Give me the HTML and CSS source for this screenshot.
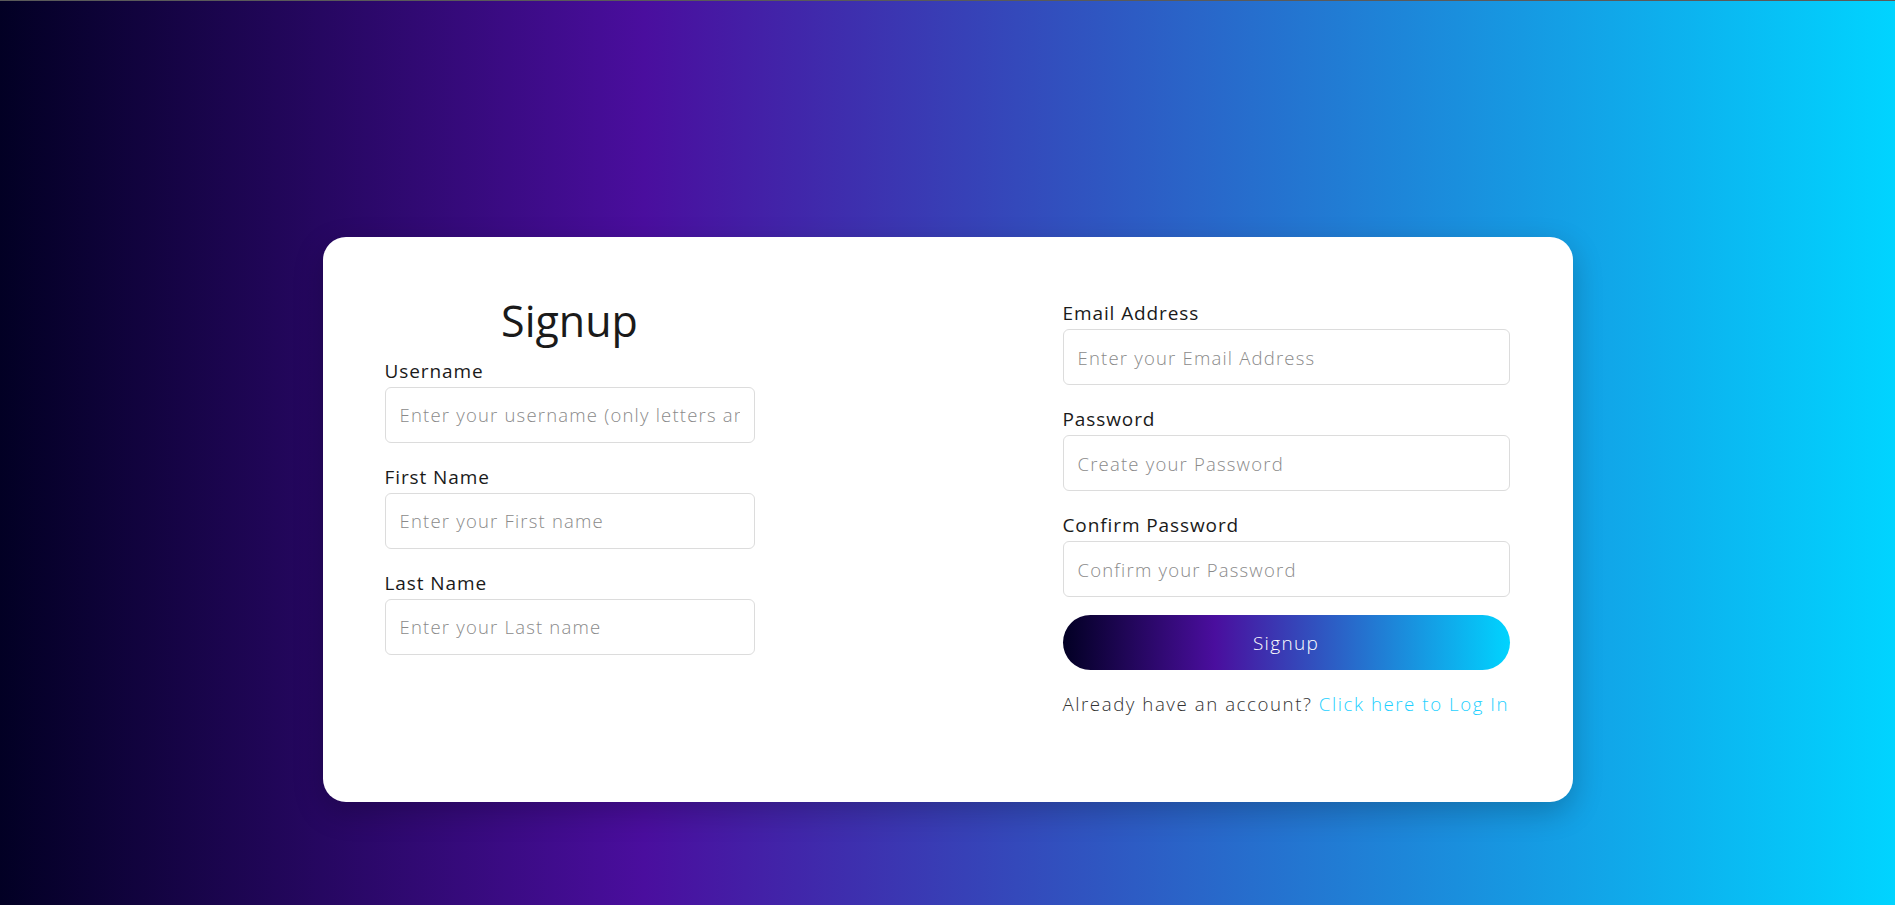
FILE: index.html
```html
<!DOCTYPE html>
<html lang="en">
<head>
<meta charset="utf-8">
<title>Signup</title>
<link rel="stylesheet" href="styles.css">
</head>
<body>
<div class="topline"></div>
<main class="page">
  <form class="card">
    <div class="col col-left">
      <h1 class="title">Signup</h1>
      <div class="field">
        <label class="label" for="username">Username</label>
        <input class="input" id="username" type="text" placeholder="Enter your username (only letters and numbers)">
      </div>
      <div class="field">
        <label class="label" for="first">First Name</label>
        <input class="input" id="first" type="text" placeholder="Enter your First name">
      </div>
      <div class="field">
        <label class="label" for="last">Last Name</label>
        <input class="input" id="last" type="text" placeholder="Enter your Last name">
      </div>
    </div>
    <div class="col col-right">
      <div class="field">
        <label class="label" for="email">Email Address</label>
        <input class="input" id="email" type="email" placeholder="Enter your Email Address">
      </div>
      <div class="field">
        <label class="label" for="pass">Password</label>
        <input class="input" id="pass" type="password" placeholder="Create your Password">
      </div>
      <div class="field field-last">
        <label class="label" for="pass2">Confirm Password</label>
        <input class="input" id="pass2" type="password" placeholder="Confirm your Password">
      </div>
      <button class="btn" type="button">Signup</button>
      <p class="switch">Already have an account? <a class="link" href="#">Click here to Log In</a></p>
    </div>
  </form>
</main>
</body>
</html>
```
FILE: styles.css
```css
* { box-sizing: border-box; }
html, body { margin: 0; padding: 0; }
body {
  min-height: 100vh;
  font-family: "Open Sans", "Liberation Sans", sans-serif;
  background: linear-gradient(90deg, #020024 0%, #4a0e9e 34%, #00d4ff 100%);
  color: #1a1a1a;
  overflow: hidden;
}
.topline { height: 1px; background: #5a5a5a; }
.page {
  display: flex;
  justify-content: center;
  padding-top: 236px;
}
.card {
  width: 1250px;
  background: #fff;
  border-radius: 23px;
  box-shadow: 0 10px 30px rgba(0, 0, 0, 0.22);
  padding: 58px 63px 84px 62px;
  display: flex;
  justify-content: space-between;
  align-items: flex-start;
}
.col { display: flex; flex-direction: column; }
.col-left { width: 370px; }
.col-right { width: 447px; padding-top: 4px; }
.title {
  margin: 0 0 10px;
  font-size: 43px;
  line-height: 1.2;
  font-weight: 400;
  text-align: center;
  color: #1a1a1a;
}
.field { display: flex; flex-direction: column; margin-bottom: 20px; }
.field-last { margin-bottom: 18px; }
.label {
  font-size: 19px;
  line-height: 28px;
  margin-bottom: 2px;
  font-weight: 400;
  letter-spacing: 0.9px;
  color: #1a1a1a;
}
.input {
  width: 100%;
  height: 56px;
  border: 1px solid #dcdcdc;
  border-radius: 6px;
  padding: 0 14px;
  font-family: inherit;
  font-size: 18.5px;
  font-weight: 300;
  letter-spacing: 1.2px;
  color: #333;
  background: #fff;
  outline: none;
}
.input::placeholder { color: #8a8a8a; font-weight: 300; }
.btn {
  height: 55px;
  border: none;
  border-radius: 28px;
  background: linear-gradient(90deg, #020024 0%, #4a0e9e 34%, #00d4ff 100%);
  color: #fff;
  font-family: inherit;
  font-size: 19px;
  font-weight: 300;
  letter-spacing: 1.3px;
  cursor: pointer;
}
.switch {
  margin: 20px 0 0;
  font-size: 18.7px;
  line-height: 28px;
  font-weight: 300;
  letter-spacing: 1.55px;
  color: #333;
  white-space: nowrap;
}
.link { color: #1ed0ff; text-decoration: none; }
```
